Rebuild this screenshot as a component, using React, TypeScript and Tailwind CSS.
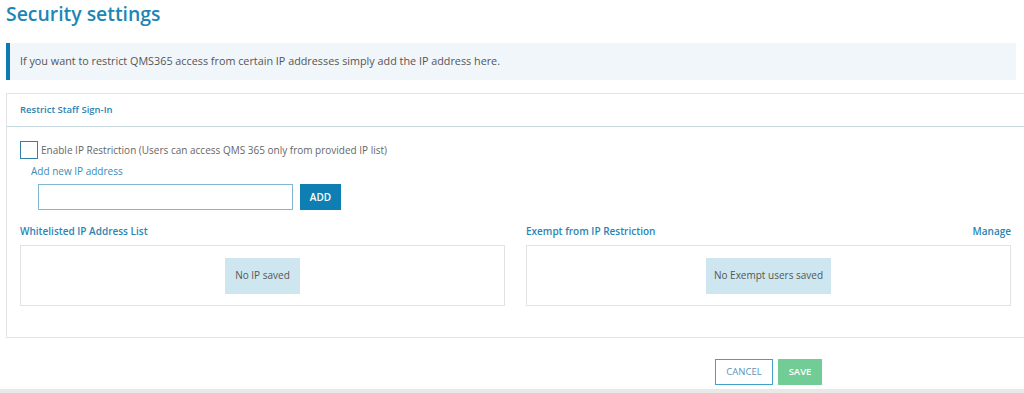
export default function App() {
  return (
    <div className="w-[1024px] h-[393px] bg-white overflow-hidden flex flex-col font-['Open_Sans',sans-serif] text-[#555]">
      <div className="px-[6px] flex-1">
        <h1 className="text-[19.4px] leading-[28px] font-semibold text-[#1c86b6]">Security settings</h1>

        <div className="mt-[15px] w-[1010px] h-[37px] bg-[#f1f6fb] border-l-4 border-[#0d7bb0] flex items-center pl-[10px] text-[10.8px] text-[#555]">
          If you want to restrict QMS365 access from certain IP addresses simply add the IP address here.
        </div>

        <div className="mt-[13px] mr-[-6px] border border-[#e3e3e3] border-r-0 h-[245px]">
          <div className="h-[33px] border-b border-[#c9d7de] flex items-center px-[13px]">
            <span className="text-[9.5px] font-semibold text-[#2a84b4]">Restrict Staff Sign-In</span>
          </div>

          <div className="px-[13px] pt-[14px]">
            <label className="flex items-center gap-[3px]">
              <span className="w-[18px] h-[18px] border border-[#2f7fa6] inline-block" />
              <span className="text-[10px] text-[#666]">Enable IP Restriction (Users can access QMS 365 only from provided IP list)</span>
            </label>
            <div className="pl-[11px] mt-[5px] text-[10px] text-[#3a8cb8]">Add new IP address</div>
            <div className="flex items-center gap-[7px] pl-[18px] mt-[5px]">
              <input className="w-[255px] h-[26px] border border-[#80b7d0] outline-none" />
              <button className="w-[41px] h-[26px] bg-[#0f7fb3] text-white text-[10px] font-semibold">ADD</button>
            </div>

            <div className="flex gap-[21px] mt-[14px]">
              <div className="flex-1">
                <div className="text-[10px] font-semibold text-[#2a84b4] h-[15px]">Whitelisted IP Address List</div>
                <div className="mt-[6px] h-[61px] border border-[#e2e2e2] flex items-center justify-center">
                  <div className="w-[75px] h-[36px] bg-[#cde6f0] flex items-center justify-center text-[10px] text-[#555]">No IP saved</div>
                </div>
              </div>
              <div className="flex-1">
                <div className="flex justify-between h-[15px]">
                  <span className="text-[10px] font-semibold text-[#2a84b4]">Exempt from IP Restriction</span>
                  <span className="text-[10px] font-semibold text-[#2a84b4]">Manage</span>
                </div>
                <div className="mt-[6px] h-[61px] border border-[#e2e2e2] flex items-center justify-center">
                  <div className="w-[125px] h-[36px] bg-[#cde6f0] flex items-center justify-center text-[10px] text-[#555]">No Exempt users saved</div>
                </div>
              </div>
            </div>
          </div>
        </div>

        <div className="flex justify-end gap-[5px] mt-[21px] pr-[196px]">
          <button className="w-[58px] h-[26px] border border-[#3fa0c8] text-[9.5px] text-[#5a95bb]">CANCEL</button>
          <button className="w-[44px] h-[26px] bg-[#72cc95] text-[9.5px] font-semibold text-white">SAVE</button>
        </div>
      </div>
      <div className="h-[4px] bg-[#e8e8e8]" />
    </div>
  )
}
